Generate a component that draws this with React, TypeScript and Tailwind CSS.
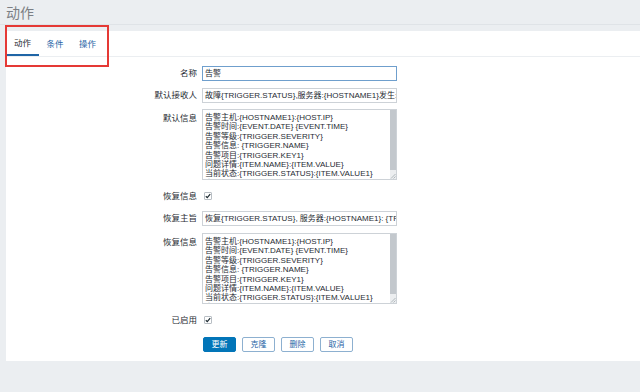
import React from "react";

const FONT = { fontFamily: '"Liberation Sans", Arial, "Noto Sans CJK SC", sans-serif' };

const MESSAGE = [
  "告警主机:{HOSTNAME1}:{HOST.IP}",
  "告警时间:{EVENT.DATE} {EVENT.TIME}",
  "告警等级:{TRIGGER.SEVERITY}",
  "告警信息: {TRIGGER.NAME}",
  "告警项目:{TRIGGER.KEY1}",
  "问题详情:{ITEM.NAME}:{ITEM.VALUE}",
  "当前状态:{TRIGGER.STATUS}:{ITEM.VALUE1}",
  "事件ID:{EVENT.ID}",
];

function Label({ children, top }: { children: React.ReactNode; top?: boolean }) {
  return (
    <div className={`w-[196px] shrink-0 pr-[5px] text-right text-[8.5px] text-[#1f2c33] ${top ? "pt-[3px] leading-[12px]" : "leading-[15px]"}`}>
      {children}
    </div>
  );
}

function TextInput({ value, focused }: { value: string; focused?: boolean }) {
  return (
    <div
      className={`h-[15px] w-[195px] overflow-hidden whitespace-nowrap border bg-white px-[2px] text-[8px] leading-[13px] text-[#1f2c33] ${
        focused ? "border-[#6f9fcd]" : "border-[#cdd2d7]"
      }`}
    >
      {value}
    </div>
  );
}

function MessageBox() {
  return (
    <div className="relative flex h-[71px] w-[195px] border border-[#cdd2d7] bg-white">
      <div className="flex-1 overflow-hidden whitespace-pre px-[2px] pt-[3px] text-[8px] leading-[9.4px] text-[#1f2c33]">
        {MESSAGE.map((l) => (
          <div key={l}>{l}</div>
        ))}
      </div>
      <div className="flex w-[6px] flex-col bg-[#eceef0]">
        <div className="h-[60px] bg-[#c3c8cd]" />
      </div>
      <svg className="absolute bottom-0 right-0" width="6" height="6" viewBox="0 0 6 6">
        <path d="M1 5.5L5.5 1M3.5 5.5L5.5 3.5" stroke="#9aa0a6" strokeWidth="0.7" />
      </svg>
    </div>
  );
}

function Check() {
  return (
    <div className="flex h-[14px] items-center pl-[2px]">
      <div className="flex h-[8px] w-[8px] items-center justify-center rounded-[1px] border border-[#b8bec4] bg-white">
        <svg width="6" height="6" viewBox="0 0 6 6">
          <path d="M0.8 3.2L2.3 4.6L5.2 1.2" stroke="#1f2c33" strokeWidth="1.2" fill="none" />
        </svg>
      </div>
    </div>
  );
}

function Btn({ children, primary }: { children: React.ReactNode; primary?: boolean }) {
  return (
    <div
      className={`flex h-[15px] w-[33px] items-center justify-center rounded-[2px] border text-[8px] ${
        primary ? "border-[#0275b8] bg-[#0275b8] text-white" : "border-[#8db0d0] bg-white text-[#1f65a6]"
      }`}
    >
      {children}
    </div>
  );
}

export default function App() {
  return (
    <div className="relative h-[392px] w-[640px] overflow-hidden bg-[#ebeef1]" style={FONT}>
      <div className="h-[25px] border-b border-[#dfe3e7] pl-[6px] text-[14px] leading-[26px] text-[#7b7f84]">动作</div>

      <div className="ml-[6px] mt-[6px] h-[330px] bg-white">
        <div className="flex h-[26px] border-b border-[#ebeef1] text-[8.5px]">
          <div className="flex w-[33px] items-center justify-center border-b-2 border-[#1f65a6] pt-[1px] text-[#1f2c33]">动作</div>
          <div className="flex w-[32px] items-center justify-center pt-[1px] text-[#1f65a6]">条件</div>
          <div className="flex w-[33px] items-center justify-center pt-[1px] text-[#1f65a6]">操作</div>
        </div>

        <div className="flex flex-col">
          <div className="mt-[9px] flex">
            <Label>名称</Label>
            <TextInput value="告警" focused />
          </div>
          <div className="mt-[7px] flex">
            <Label>默认接收人</Label>
            <TextInput value="故障{TRIGGER.STATUS},服务器:{HOSTNAME1}发生: {TRIGGER.NAME}故障!" />
          </div>
          <div className="mt-[6px] flex">
            <Label top>默认信息</Label>
            <MessageBox />
          </div>
          <div className="mt-[9px] flex">
            <Label>恢复信息</Label>
            <Check />
          </div>
          <div className="mt-[7px] flex">
            <Label>恢复主旨</Label>
            <TextInput value="恢复{TRIGGER.STATUS}, 服务器:{HOSTNAME1}: {TRIGGER.NAME}已恢复!" />
          </div>
          <div className="mt-[7px] flex">
            <Label top>恢复信息</Label>
            <MessageBox />
          </div>
          <div className="mt-[9px] flex">
            <Label>已启用</Label>
            <Check />
          </div>
          <div className="ml-[197px] mt-[9px] flex gap-[6px]">
            <Btn primary>更新</Btn>
            <Btn>克隆</Btn>
            <Btn>删除</Btn>
            <Btn>取消</Btn>
          </div>
        </div>
      </div>

      <div className="absolute left-[5px] top-[25px] h-[42px] w-[104px] border-2 border-[#e53935]" />
    </div>
  );
}
